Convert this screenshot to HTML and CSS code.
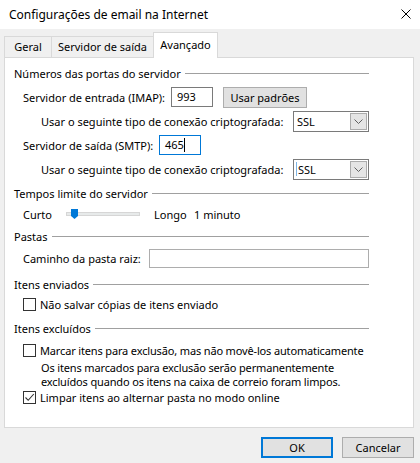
FILE: index.html
```html
<!DOCTYPE html>
<html lang="pt-BR">
<head>
    <meta charset="UTF-8">
    <title>Configurações de email na Internet</title>
    <link rel="stylesheet" href="styles.css">
</head>
<body>
    <div class="dialog">
        <div class="titlebar">
            <span class="title">Configurações de email na Internet</span>
            <svg class="close" width="10" height="10" viewBox="0 0 10 10">
                <path d="M0.5 0.5 L9.5 9.5 M9.5 0.5 L0.5 9.5" stroke="#000" stroke-width="1" fill="none"/>
            </svg>
        </div>

        <div class="content">
            <div class="tabs">
                <div class="tab tab-geral">Geral</div>
                <div class="tab tab-saida">Servidor de saída</div>
                <div class="tab tab-avancado active">Avançado</div>
            </div>

            <div class="panel">
                <div class="group g-ports">
                    <span>Números das portas do servidor</span><span class="rule"></span>
                </div>
                <div class="row r-imap">
                    <label class="lbl lbl-imap">Servidor de entrada (IMAP):</label>
                    <div class="field port">993</div>
                    <button class="btn btn-defaults">Usar padrões</button>
                </div>
                <div class="row r-usar">
                    <label class="lbl lbl-usar">Usar o seguinte tipo de conexão criptografada:</label>
                    <div class="combo"><span class="combo-text">SSL</span><span class="combo-btn"><svg width="9" height="5" viewBox="0 0 9 5"><path d="M0.5 0.5 L4.5 4.5 L8.5 0.5" stroke="#606060" fill="none"/></svg></span></div>
                </div>
                <div class="row r-usar">
                    <label class="lbl lbl-smtp">Servidor de saída (SMTP):</label>
                    <div class="field port focused">465<span class="caret"></span></div>
                </div>
                <div class="row r-usar">
                    <label class="lbl lbl-usar">Usar o seguinte tipo de conexão criptografada:</label>
                    <div class="combo"><span class="combo-text"><span class="combo-caret"></span>SSL</span><span class="combo-btn"><svg width="9" height="5" viewBox="0 0 9 5"><path d="M0.5 0.5 L4.5 4.5 L8.5 0.5" stroke="#606060" fill="none"/></svg></span></div>
                </div>

                <div class="group g-tempos">
                    <span>Tempos limite do servidor</span><span class="rule"></span>
                </div>
                <div class="row r-slider">
                    <span class="lbl lbl-curto">Curto</span>
                    <div class="slider">
                        <div class="track"></div>
                        <svg class="thumb" width="7" height="10" viewBox="0 0 7 10">
                            <path d="M0 0 H7 V7 L3.5 10 L0 7 Z" fill="#0078d7"/>
                        </svg>
                    </div>
                    <span class="lbl lbl-longo">Longo</span>
                    <span>1 minuto</span>
                </div>

                <div class="group g-pastas">
                    <span>Pastas</span><span class="rule"></span>
                </div>
                <div class="row r-path">
                    <label class="lbl lbl-path">Caminho da pasta raiz:</label>
                    <div class="field path"></div>
                </div>

                <div class="group g-enviados">
                    <span>Itens enviados</span><span class="rule"></span>
                </div>
                <div class="row r-check">
                    <span class="check"></span>
                    <span>Não salvar cópias de itens enviado</span>
                </div>

                <div class="group g-excluidos">
                    <span>Itens excluídos</span><span class="rule"></span>
                </div>
                <div class="row r-check r-mark">
                    <span class="check"></span>
                    <span class="tight">Marcar itens para exclusão, mas não movê-los automaticamente</span>
                </div>
                <p class="note tight">Os itens marcados para exclusão serão permanentemente<br>excluídos quando os itens na caixa de correio foram limpos.</p>
                <div class="row r-check r-purge">
                    <span class="check checked"><svg width="11" height="11" viewBox="0 0 11 11"><path d="M1.5 5.5 L4.2 8.3 L9.8 2" stroke="#333" stroke-width="1.1" fill="none"/></svg></span>
                    <span>Limpar itens ao alternar pasta no modo online</span>
                </div>
            </div>

            <div class="actions">
                <button class="btn btn-ok">OK</button>
                <button class="btn btn-cancel">Cancelar</button>
            </div>
        </div>
    </div>
</body>
</html>
```

FILE: styles.css
```css
body {
    margin: 0;
    font-family: "Noto Sans", "Open Sans", sans-serif;
    font-size: 11px;
    color: #000;
    background-color: #f0f0f0;
    white-space: nowrap;
}

.dialog {
    width: 420px;
    height: 463px;
    background-color: #f0f0f0;
    overflow: hidden;
}

/* window caption */
.titlebar {
    height: 29px;
    background-color: #fff;
    display: flex;
    align-items: center;
    justify-content: space-between;
    padding: 0 8px 0 9px;
}

.title {
    font-size: 12px;
    margin-top: -1px;
}

.close {
    margin-right: 1px;
    margin-top: -1px;
}

.content {
    padding: 3px 6px 0 4px;
}

/* tab strip */
.tabs {
    display: flex;
    align-items: flex-end;
    height: 25px;
}

.tab {
    box-sizing: border-box;
    height: 21px;
    line-height: 19px;
    border: 1px solid #d9d9d9;
    border-bottom: none;
    background-color: #f0f0f0;
    margin-right: -1px;
    text-align: center;
}

.tab-geral { width: 48px; }
.tab-saida { width: 103px; }

.tab.active {
    width: 65px;
    height: 26px;
    line-height: 23px;
    background-color: #fff;
    margin-bottom: -1px;
    position: relative;
    z-index: 1;
}

.panel {
    background-color: #fff;
    border: 1px solid #d9d9d9;
    height: 369px;
    padding: 0 44px 0 9px;
}

/* group headings with a rule after them */
.group {
    display: flex;
    align-items: center;
    height: 16px;
}

.rule {
    flex: 1;
    border-top: 1px solid #a0a0a0;
    margin-left: 4px;
    margin-top: 1px;
}

.g-ports { margin-top: 7px; }
.g-tempos { margin-top: 5px; }
.g-pastas { margin-top: 6px; }
.g-enviados { margin-top: 8px; }
.g-excluidos { margin-top: 8px; }

.row {
    display: flex;
    align-items: center;
    padding-left: 9px;
}

.lbl {
    flex-shrink: 0;
}

.tight {
    letter-spacing: -0.15px;
}

.r-imap {
    height: 22px;
    margin-top: 5px;
}

.r-usar {
    height: 22px;
    margin-top: 2px;
}

.lbl-imap { width: 148px; }
.lbl-smtp { width: 136px; }

.lbl-usar {
    width: 270px;
    padding-left: 18px;
    box-sizing: border-box;
}

.field {
    box-sizing: border-box;
    border: 1px solid #7a7a7a;
    background-color: #fff;
    height: 20px;
}

.port {
    width: 42px;
    padding-left: 5px;
    line-height: 18px;
}

.port.focused {
    border-color: #0078d7;
}

.caret {
    display: inline-block;
    width: 1px;
    height: 14px;
    background-color: #000;
    vertical-align: -3px;
}

.btn {
    font-family: inherit;
    font-size: 11px;
    color: #000;
    background-color: #e1e1e1;
    border: 1px solid #adadad;
    padding: 0;
    box-sizing: border-box;
}

.btn-defaults {
    width: 84px;
    height: 21px;
    margin-left: 10px;
}

/* drop-down lists */
.combo {
    box-sizing: border-box;
    width: 76px;
    height: 21px;
    border: 1px solid #7a7a7a;
    display: flex;
    align-items: center;
    justify-content: space-between;
    padding: 1px;
}

.combo-text {
    padding-left: 2px;
    display: flex;
    align-items: center;
}

.combo-caret {
    display: inline-block;
    width: 1px;
    height: 14px;
    background-color: #7fb4e3;
    margin-right: 1px;
    margin-left: -1px;
}

.combo-btn {
    width: 17px;
    height: 17px;
    box-sizing: border-box;
    background-color: #e5e5e5;
    border: 1px solid #acacac;
    display: flex;
    align-items: center;
    justify-content: center;
}

/* timeout slider */
.r-slider {
    height: 16px;
    margin-top: 5px;
}

.lbl-curto { width: 43px; }

.slider {
    position: relative;
    width: 74px;
    height: 16px;
    margin-right: 14px;
}

.track {
    position: absolute;
    left: 0;
    right: 0;
    top: 6px;
    height: 2px;
    background-color: #e7eaea;
    border: 1px solid #d6d6d6;
}

.thumb {
    position: absolute;
    left: 5px;
    top: 3px;
}

.lbl-longo { width: 40px; }

.r-path {
    height: 20px;
    margin-top: 4px;
}

.lbl-path { width: 126px; }

.path {
    width: 220px;
    height: 19px;
    border-color: #adadad;
}

/* checkboxes */
.r-check {
    height: 16px;
    margin-top: 4px;
}

.r-mark { margin-top: 6px; }
.r-purge { margin-top: 1px; }

.check {
    box-sizing: border-box;
    flex-shrink: 0;
    width: 13px;
    height: 13px;
    border: 1px solid #333;
    background-color: #fff;
    margin-right: 4px;
    display: flex;
    align-items: center;
    justify-content: center;
}

.note {
    margin: 3px 0 0 27px;
    line-height: 13.5px;
}

/* dialog buttons */
.actions {
    display: flex;
    justify-content: flex-end;
    gap: 9px;
    margin-top: 9px;
}

.btn-ok,
.btn-cancel {
    width: 72px;
    height: 21px;
}

.btn-ok {
    border: 2px solid #0078d7;
}
```
